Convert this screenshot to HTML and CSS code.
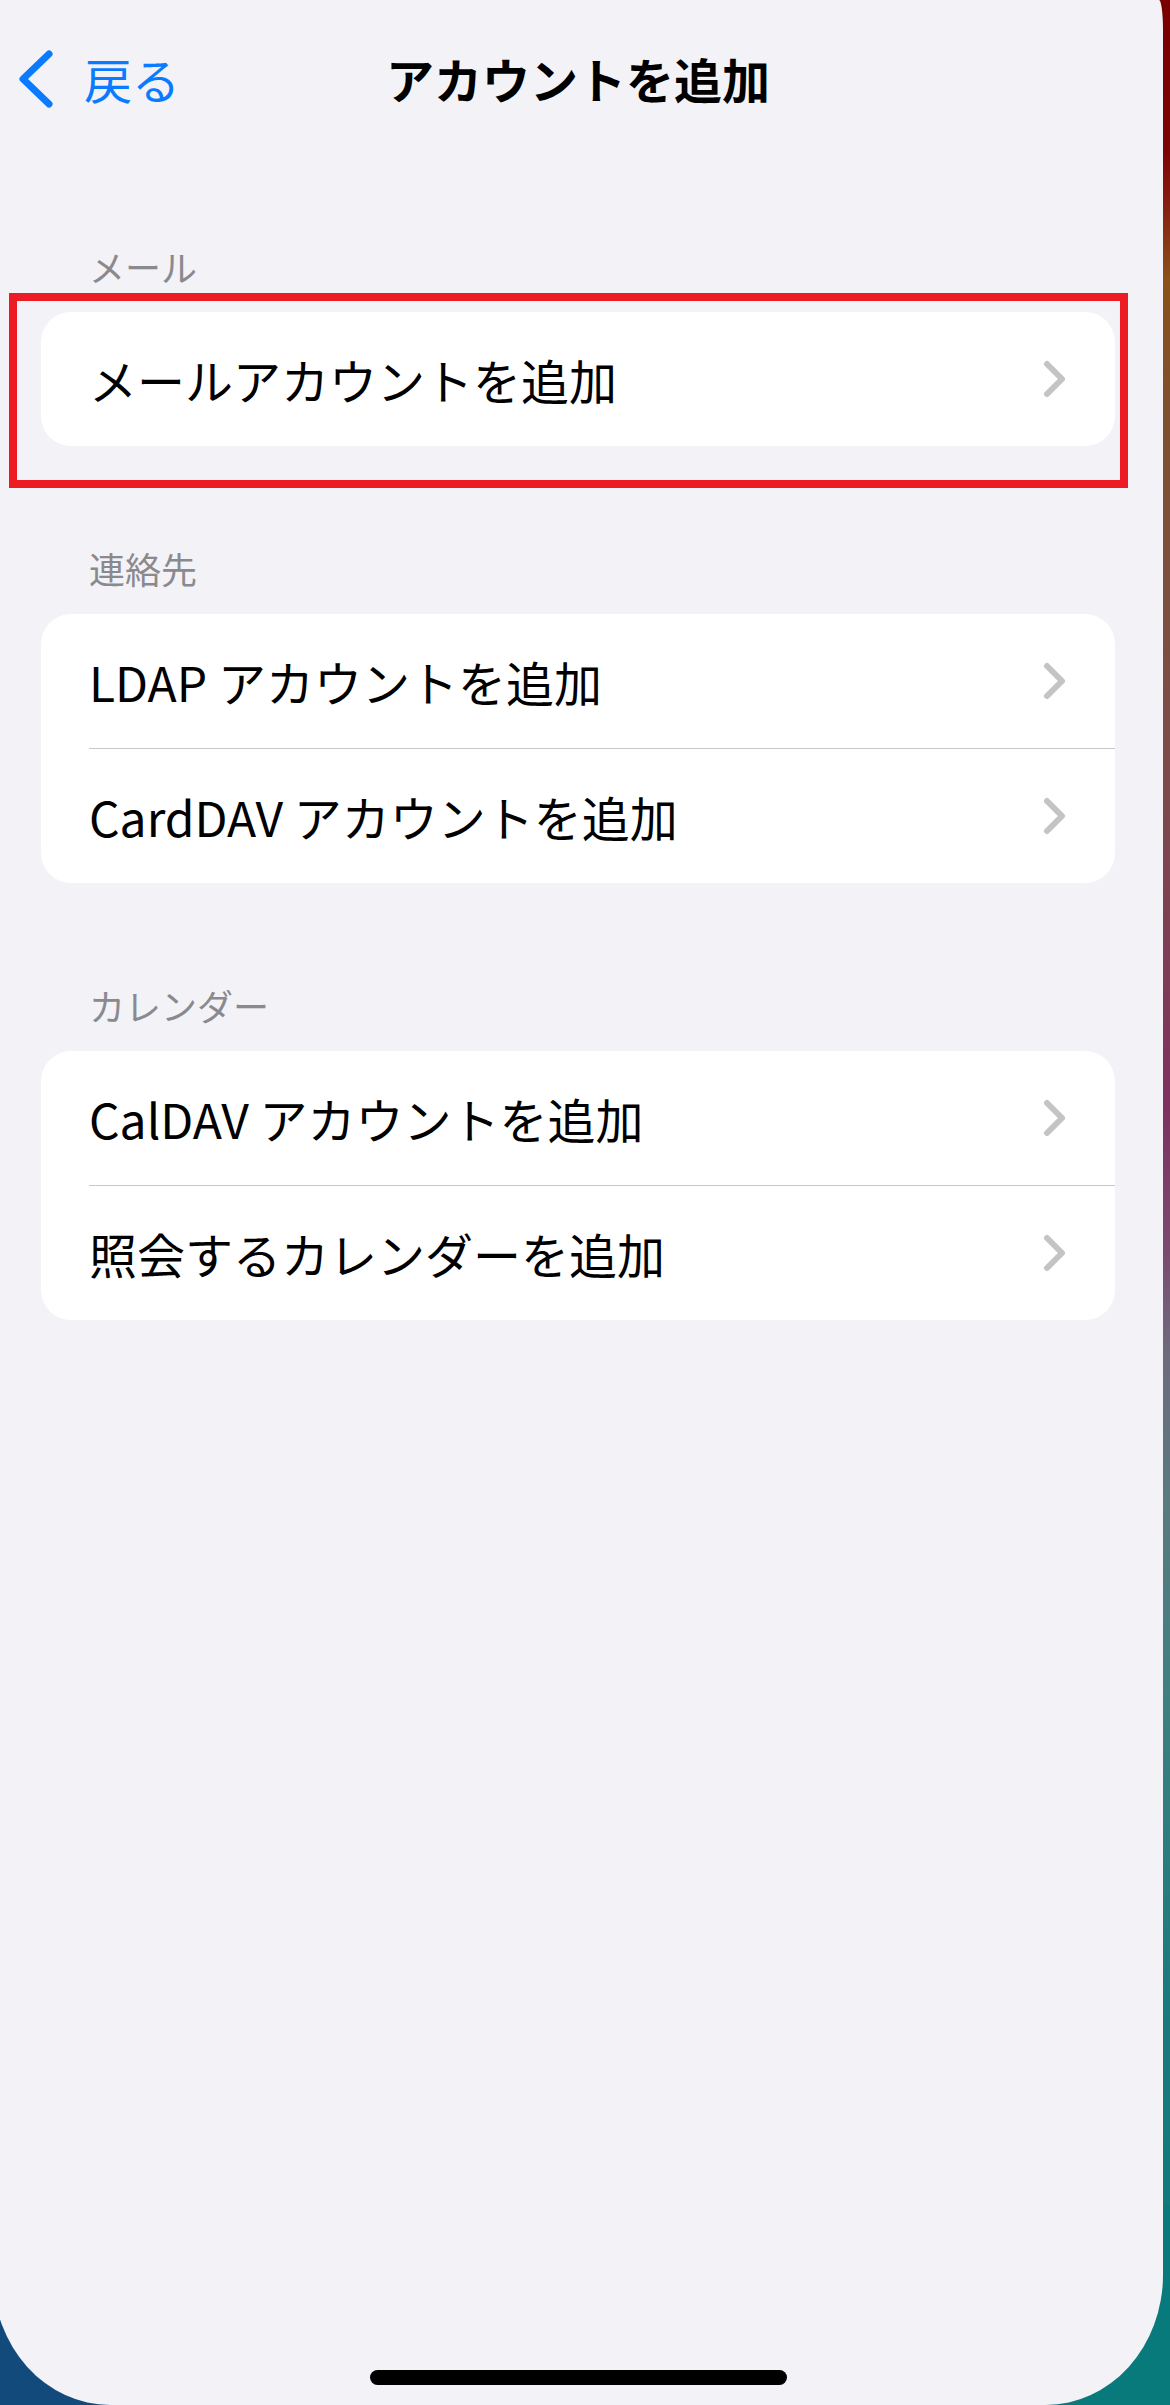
FILE: index.html
```html
<!DOCTYPE html>
<html lang="ja">
<head>
<meta charset="UTF-8">
<meta name="viewport" content="width=device-width, initial-scale=1.0">
<title>アカウントを追加</title>
<link rel="stylesheet" href="styles.css">
</head>
<body>
<div class="screen">
  <div class="nav">
    <a class="back">
      <svg width="40" height="64" viewBox="0 0 40 64"><path d="M34 8 L8 33 L34 58"/></svg>
      <span>戻る</span>
    </a>
    <div class="title">アカウントを追加</div>
    <div></div>
  </div>

  <div class="list">
    <div class="section">
      <div class="section-header">メール</div>
      <div class="card">
        <div class="row">
          <div class="row-inner">
            <span>メールアカウントを追加</span>
            <svg class="chevron" width="26" height="40" viewBox="0 0 26 40"><path d="M5 5 L20 20 L5 35"/></svg>
          </div>
        </div>
        <div class="highlight"></div>
      </div>
    </div>

    <div class="section">
      <div class="section-header">連絡先</div>
      <div class="card">
        <div class="row">
          <div class="row-inner">
            <span>LDAP アカウントを追加</span>
            <svg class="chevron" width="26" height="40" viewBox="0 0 26 40"><path d="M5 5 L20 20 L5 35"/></svg>
          </div>
        </div>
        <div class="row">
          <div class="row-inner">
            <span>CardDAV アカウントを追加</span>
            <svg class="chevron" width="26" height="40" viewBox="0 0 26 40"><path d="M5 5 L20 20 L5 35"/></svg>
          </div>
        </div>
      </div>
    </div>

    <div class="section">
      <div class="section-header">カレンダー</div>
      <div class="card">
        <div class="row">
          <div class="row-inner">
            <span>CalDAV アカウントを追加</span>
            <svg class="chevron" width="26" height="40" viewBox="0 0 26 40"><path d="M5 5 L20 20 L5 35"/></svg>
          </div>
        </div>
        <div class="row">
          <div class="row-inner">
            <span>照会するカレンダーを追加</span>
            <svg class="chevron" width="26" height="40" viewBox="0 0 26 40"><path d="M5 5 L20 20 L5 35"/></svg>
          </div>
        </div>
      </div>
    </div>
  </div>

  <div class="home-indicator"></div>
</div>
</body>
</html>
```

FILE: styles.css
```css
html,
body {
  margin: 0;
  padding: 0;
  height: 2405px;
  overflow: hidden;
}
body {
  font-family: "Noto Sans CJK JP", "Noto Sans", sans-serif;
  /* wallpaper showing around the screen edge */
  background:
    linear-gradient(90deg, #134a7c 0%, #134a7c 20%, #087a7c 80%) bottom / 100% 200px no-repeat,
    linear-gradient(180deg, #7a0000 0px, #7c0404 150px, #861a10 200px, #8a5218 280px, #80502c 400px,
      #7c5040 600px, #7c4a4c 800px, #7e3a58 1000px, #7e3060 1100px, #7a4a70 1250px,
      #6e6a7e 1350px, #5a7a80 1500px, #3e8080 1700px, #1a7a7c 2000px, #087a7c 2405px);
}
.screen {
  position: relative;
  width: 1170px;
  height: 2405px;
  margin-left: -7px; /* screenshot is cut a little on the left */
  background-color: #f2f2f7;
  border-radius: 0 4px 117px 117px / 0 30px 130px 130px;
}
.nav {
  display: grid;
  grid-template-columns: 1fr auto 1fr;
  align-items: center;
  height: 160px;
  padding: 0 22px 5px 22px;
  box-sizing: border-box;
}
.back {
  display: flex;
  align-items: center;
  color: #0a7aff;
  font-size: 48px;
  line-height: 64px;
}
.back svg {
  margin-right: 29px;
}
.back path {
  fill: none;
  stroke: #0a7aff;
  stroke-width: 7;
  stroke-linecap: round;
  stroke-linejoin: round;
}
.title {
  font-size: 48px;
  font-weight: 700;
  color: #000;
  line-height: 64px;
}
.list {
  display: flex;
  flex-direction: column;
  gap: 100px;
  padding: 84px 48px 0 48px;
}
.section-header {
  font-size: 36px;
  line-height: 44px;
  color: #8a8a8e;
  padding-left: 48px;
  margin-bottom: 24px;
}
.card {
  position: relative;
  background-color: #fff;
  border-radius: 30px;
}
.row {
  padding-left: 48px;
}
.row-inner {
  display: flex;
  align-items: center;
  justify-content: space-between;
  height: 134px;
  padding-right: 47px;
  font-size: 48px;
  color: #000;
}
.row + .row .row-inner {
  border-top: 1px solid #c8c8cc;
}
.chevron path {
  fill: none;
  stroke: #c4c4c7;
  stroke-width: 6;
  stroke-linecap: round;
  stroke-linejoin: round;
}
/* red annotation frame drawn over the first card */
.highlight {
  position: absolute;
  top: -19px;
  left: -32px;
  right: -13px;
  bottom: -42px;
  border: 8px solid #ed1c24;
}
.home-indicator {
  position: absolute;
  left: 50%;
  bottom: 20px;
  width: 417px;
  height: 15px;
  margin-left: -208px;
  background-color: #000;
  border-radius: 8px;
}
```
